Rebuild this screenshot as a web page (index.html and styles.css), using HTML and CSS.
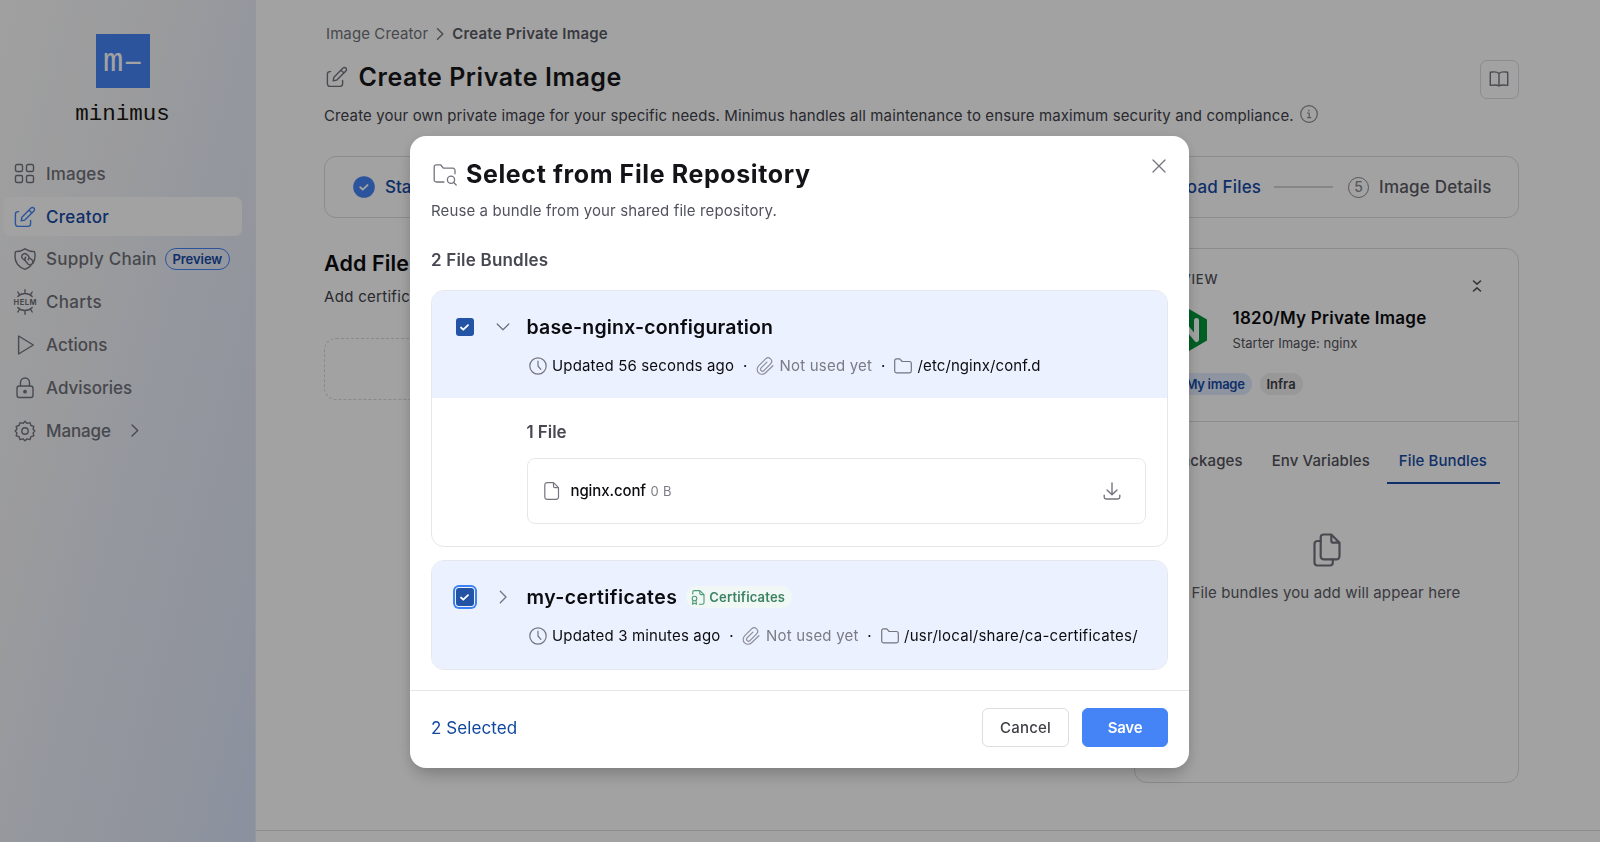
FILE: index.html
```html
<!DOCTYPE html>
<html lang="en">
<head>
<meta charset="utf-8">
<title>Create Private Image – minimus</title>
<link rel="stylesheet" href="styles.css">
</head>
<body>
<svg class="defs" width="0" height="0">
  <symbol id="edit" viewBox="0 0 22 22"><path d="M4.600 5.600H4a2.600 2.600 0 0 0-2.600 2.600v9.600A2.600 2.600 0 0 0 4 20.400h10a2.600 2.600 0 0 0 2.600-2.600v-3.400"/><path d="M7.200 14.800l.7-3.600L17 2.100a2 2 0 0 1 2.900 2.900l-9.100 9.100zM15 4.100l2.900 2.900"/></symbol>
  <symbol id="clock" viewBox="0 0 18 18"><circle cx="9" cy="9" r="8.200"/><path d="M9 4.200V9l2.800 3.300"/></symbol>
  <symbol id="clip" viewBox="0 0 18 18"><path d="M16.900 8.700l-7.300 7.100a4.900 4.900 0 0 1-7-6.900l7-7a3.500 3.500 0 0 1 5 4.900l-6.700 6.800a1.900 1.900 0 0 1-2.800-2.700l5.800-5.800"/></symbol>
  <symbol id="folder" viewBox="0 0 18 16"><path d="M.7 13V2.600A1.800 1.800 0 0 1 2.500.8h3.200l2.500 2.700h7.200a1.900 1.900 0 0 1 1.900 1.900V13a1.800 1.800 0 0 1-1.800 1.800h-13A1.800 1.800 0 0 1 .7 13z"/></symbol>
</svg>

<div class="app">
  <aside class="sidebar">
    <div class="brand">
      <div class="brand-mark">m–</div>
      <div class="brand-name">minimus</div>
    </div>
    <nav class="nav">
      <a class="nav-item"><svg class="icon" width="22" height="22" viewBox="0 0 22 22"><rect x="1.500" y="1.500" width="7" height="7" rx="1.500"/><rect x="12.500" y="1.500" width="7" height="7" rx="1.500"/><rect x="1.500" y="12.500" width="7" height="7" rx="1.500"/><rect x="12.500" y="12.500" width="7" height="7" rx="1.500"/></svg><span class="t-images">Images</span></a>
      <a class="nav-item active"><svg class="icon" width="22" height="22"><use href="#edit"/></svg><span class="t-creator">Creator</span></a>
      <a class="nav-item"><svg class="icon" width="22" height="22" viewBox="0 0 22 22"><path d="M11 .8C8 2.800 5 3.500 1.500 3.600C-.2 12 3 18.500 11 21.300c2.300-.9 4.300-2 5.800-3.500M11 .8c3 2 6 2.700 9.500 2.800 1 4 .6 8-1.300 11.300"/><path d="M11 12.300l-2-1.300a3 3 0 0 1-.5-4.200 3 3 0 0 1 4.200-.4l1.300 1.200a3 3 0 0 1 .2 4.100"/><path d="M11.700 9.300a3 3 0 0 0 .2 4.200l2.300 2.700a2.800 2.800 0 0 0 4-.4 2.900 2.900 0 0 0-.3-4l-2-1.600"/></svg><span class="t-supply">Supply Chain</span><span class="badge-preview">Preview</span></a>
      <a class="nav-item"><svg class="icon" width="22" height="26" viewBox="0 0 22 26"><path d="M3.800 7.600a10 10 0 0 1 14.400 0M3.800 18.400a10 10 0 0 0 14.400 0M11 4.200V.8M5.600 5.900L3.800 3M16.400 5.900L18.200 3M11 21.800v3.400M5.600 20.100L3.800 23M16.400 20.100l1.800 2.900"/><text class="helm" x="-.5" y="15.500" textLength="23">HELM</text></svg><span class="t-charts">Charts</span></a>
      <a class="nav-item"><svg class="icon" width="22" height="22" viewBox="0 0 22 22"><path d="M4.600 2v18L19.300 11z"/></svg><span class="t-actions">Actions</span></a>
      <a class="nav-item"><svg class="icon" width="22" height="22" viewBox="0 0 22 22"><rect x="3" y="9" width="16" height="11.500" rx="2.200"/><path d="M6.500 9V5.500a4.500 4.500 0 0 1 9 0V9"/><circle class="solid" cx="11" cy="14.700" r="1.200"/></svg><span>Advisories</span></a>
      <a class="nav-item"><svg class="icon" width="22" height="22" viewBox="0 0 22 22"><circle cx="11" cy="11" r="3.200"/><path d="M11 1.200l2.100 2.200 2.900-.8.900 2.900 2.900.9-.7 2.800 1.700 1.800-1.700 1.900.7 2.900-2.900.9-.9 2.900-2.900-.8L11 20.800l-2.100-2-2.900.8-.9-2.900-2.900-.9.700-2.900L1.200 11l1.700-1.800-.7-2.800 2.900-.9.900-2.900 2.900.8z"/></svg><span class="t-manage">Manage</span><svg class="icon more" width="8" height="13" viewBox="0 0 8 13"><path d="M1 1l5.700 5.500L1 12"/></svg></a>
    </nav>
  </aside>

  <main class="main">
    <div class="content">
      <header class="page-head">
        <div class="head-text">
          <div class="crumbs"><span>Image Creator</span><svg class="icon" width="8" height="12" viewBox="0 0 8 12"><path d="M1.500 .8L6.800 6 1.500 11.200"/></svg><b>Create Private Image</b></div>
          <h1 class="page-title"><svg class="icon" width="22" height="22"><use href="#edit"/></svg><span>Create Private Image</span></h1>
          <p class="page-desc"><span>Create your own private image for your specific needs. Minimus handles all maintenance to ensure maximum security and compliance.</span><svg class="icon" width="18" height="18" viewBox="0 0 18 18"><circle cx="9" cy="9" r="8.300"/><path d="M7.500 8h1.700v4.500M7.500 12.600h3.300M8.900 5v1"/></svg></p>
        </div>
        <button class="docs"><svg class="icon" width="20" height="16" viewBox="0 0 20 16"><path d="M10 2.500v12.300M10 2.500C8.500.8 5 .6 1.300 1.200v13.200c3.700-.7 7-.5 8.700.4 1.700-.9 5-1.100 8.700-.4V1.200C15 .6 11.500.8 10 2.500z"/></svg></button>
      </header>

      <section class="stepper">
        <div class="step done"><svg width="22" height="22" viewBox="0 0 22 22"><circle class="step-dot" cx="11" cy="11" r="10.800"/><path class="step-tick" d="M7.300 11.200l2.500 2.400 4.700-4.500"/></svg><span>Starter</span></div>
        <div class="steps-right">
          <div class="step done"><span class="upload">Upload Files</span></div>
          <i class="step-line"></i>
          <div class="step next"><em class="step-num">5</em><span>Image Details</span></div>
        </div>
      </section>

      <div class="columns">
        <section class="files">
          <h2 class="files-title">Add Files</h2>
          <p class="files-desc">Add certificates</p>
          <div class="dropzone"></div>
        </section>
        <section class="preview">
          <div class="preview-top">
            <div class="preview-bar"><span class="eyebrow">PREVIEW</span><svg class="icon" width="10" height="12" viewBox="0 0 10 12"><path d="M1.500 1L5 4.200 8.500 1M1.500 11L5 7.800 8.500 11"/></svg></div>
            <div class="image-row">
              <svg width="36" height="42" viewBox="0 0 36 42"><path class="nginx-hex" d="M18 0l18 10.500v21L18 42 0 31.500v-21z"/><path class="nginx-n" d="M10 30.500v-19l15.500 19v-19"/></svg>
              <div><div class="image-name">1820/My Private Image</div><div class="image-from">Starter Image: <span>nginx</span></div></div>
            </div>
            <div class="tags"><span class="tag blue">My image</span><span class="tag">Infra</span></div>
          </div>
          <div class="tabs"><span class="tab">Packages</span><span class="tab">Env Variables</span><span class="tab selected">File Bundles</span></div>
          <div class="empty">
            <svg class="icon" width="28" height="34" viewBox="0 0 28 34"><path d="M7.700 8H4.500A3 3 0 0 0 1.500 11v18.500a3 3 0 0 0 3 3h12.300a3 3 0 0 0 3-3v-3.200"/><path d="M10.700 1.500h7.600l8.200 8.200v13.600a3 3 0 0 1-3 3H10.700a3 3 0 0 1-3-3V4.500a3 3 0 0 1 3-3zM18.300 1.500v6.200a2 2 0 0 0 2 2h6.200"/></svg>
            <p>File bundles you add will appear here</p>
          </div>
        </section>
      </div>
    </div>
    <footer class="page-foot"></footer>
  </main>
</div>

<div class="overlay">
  <div class="modal">
    <div class="modal-body">
      <header class="modal-head">
        <h2 class="modal-title"><svg class="icon" width="24" height="22" viewBox="0 0 24 22"><path d="M11 18H3.200A2 2 0 0 1 1.200 16V2.800a2 2 0 0 1 2-2h4.300l3 3.400h9.300a2.200 2.200 0 0 1 2.200 2.200v3.400"/><circle cx="18" cy="15.800" r="3.600"/><path d="M20.700 18.500l2.500 2.500"/></svg><span>Select from File Repository</span></h2>
        <svg class="icon close" width="14" height="14" viewBox="0 0 14 14"><path d="M1 1l12 12M13 1L1 13"/></svg>
      </header>
      <p class="modal-sub">Reuse a bundle from your shared file repository.</p>
      <h3 class="count">2 File Bundles</h3>

      <article class="bundle open">
        <div class="bundle-head">
          <div class="bundle-line">
            <span class="check"><svg width="9" height="7" viewBox="0 0 9 7"><path d="M1 3.500l2.300 2.200L8 1.200"/></svg></span>
            <svg class="icon chevron" width="14" height="8" viewBox="0 0 14 8"><path d="M1.200 1L7 6.800 12.800 1"/></svg>
            <span class="bundle-name">base-nginx-configuration</span>
          </div>
          <div class="meta">
            <svg class="icon" width="18" height="18"><use href="#clock"/></svg><span class="m-updated">Updated 56 seconds ago</span><i>·</i>
            <svg class="icon dim" width="18" height="18"><use href="#clip"/></svg><span class="unused">Not used yet</span><i>·</i>
            <svg class="icon" width="18" height="16"><use href="#folder"/></svg><span class="m-path">/etc/nginx/conf.d</span>
          </div>
        </div>
        <div class="bundle-files">
          <h4 class="files-count">1 File</h4>
          <div class="file">
            <svg class="icon" width="16" height="18" viewBox="0 0 16 18"><path d="M3 .7h6.500l5 5V15a2.200 2.200 0 0 1-2.200 2.300H3A2.200 2.200 0 0 1 .8 15V3A2.200 2.200 0 0 1 3 .7zM9.500.7v3.500a1.500 1.500 0 0 0 1.500 1.500h3.500"/></svg>
            <span class="file-name">nginx.conf</span><span class="file-size">0 B</span>
            <svg class="icon download" width="18" height="18" viewBox="0 0 18 18"><path d="M9 1v11.500M4 8l5 4.700L14 8M1.200 13.300v1.900A1.900 1.900 0 0 0 3.100 17h11.800a1.900 1.900 0 0 0 1.900-1.800v-1.900"/></svg>
          </div>
        </div>
      </article>

      <article class="bundle">
        <div class="bundle-head">
          <div class="bundle-line">
            <span class="check focused"><svg width="9" height="7" viewBox="0 0 9 7"><path d="M1 3.500l2.300 2.200L8 1.200"/></svg></span>
            <svg class="icon chevron" width="14" height="14" viewBox="0 0 14 14"><path d="M4.300 1.200L10 7l-5.700 5.800"/></svg>
            <span class="bundle-name certs">my-certificates</span>
            <span class="cert-badge"><svg width="14" height="15" viewBox="0 0 14 15"><path d="M1.800 4.500V2A1.400 1.400 0 0 1 3.200.6h5.600l4.200 4v8.200a1.500 1.500 0 0 1-1.500 1.500H8M8.800.6V3.300a1.300 1.300 0 0 0 1.300 1.300H13"/><circle cx="3.500" cy="8.500" r="2.300"/><path d="M2 10.500L1.500 14.300l2-1.200 2 1.200L5 10.500"/></svg>Certificates</span>
          </div>
          <div class="meta">
            <svg class="icon" width="18" height="18"><use href="#clock"/></svg><span class="m-updated">Updated 3 minutes ago</span><i>·</i>
            <svg class="icon dim" width="18" height="18"><use href="#clip"/></svg><span class="unused">Not used yet</span><i>·</i>
            <svg class="icon" width="18" height="16"><use href="#folder"/></svg><span class="m-path long">/usr/local/share/ca-certificates/</span>
          </div>
        </div>
      </article>
    </div>
    <footer class="modal-foot">
      <span class="selected-count">2 Selected</span>
      <button class="btn cancel">Cancel</button>
      <button class="btn save">Save</button>
    </footer>
  </div>
</div>
</body>
</html>
```
FILE: styles.css
```css
* { box-sizing: border-box; }
body { margin: 0; font: 400 15px/20px Inter, "Liberation Sans", sans-serif; color: #0c0c10; background: #fff; }
h1, h2, h3, h4, p { margin: 0; font-weight: inherit; font-size: inherit; }
button { font: inherit; background: none; padding: 0; }
i, em { font-style: normal; }
span, h1, h2, h3, h4, p { white-space: nowrap; }
.defs { display: block; position: absolute; }
svg { flex: none; }
.icon { fill: none; stroke: #74747e; stroke-width: 1.4; stroke-linecap: round; stroke-linejoin: round; display: block; overflow: visible; }

.app { display: flex; width: 1600px; height: 842px; overflow: hidden; }

/* Sidebar */
.sidebar { width: 256px; flex: none; background: linear-gradient(105deg, #fcfcfc 0%, #f3f4f7 36%, #edf1f9 44%, #e7ecf8 65%, #e1e8f8 84%, #dbe4fb 100%); border-right: 1px solid #eeeef2; }
.brand { display: flex; flex-direction: column; align-items: center; padding: 34px 12px 0 0; width: 257px; }
.brand-mark { width: 54px; height: 54px; background: #4484f7; color: #fff; font: 34px/56px "Liberation Mono", monospace; text-align: center; text-indent: 1px; letter-spacing: -.5px; overflow: hidden; }
.brand-name { font: 22.500px/24px "Liberation Mono", monospace; margin-top: 14px; color: #1a1712; }
.nav { display: flex; flex-direction: column; gap: 3.800px; padding: 28.400px 13px 0 3px; }
.nav-item { display: flex; align-items: center; height: 39px; padding-left: 11px; border-radius: 7px; font-size: 17px; font-weight: 500; color: #71717a; }
.nav-item .icon { margin-right: 10px; }
.nav-item.active { background: #fff; color: #164aa6; }
.nav-item.active .icon { stroke: #4484f7; }
.nav-item .solid { fill: #71717a; }
.helm { font: 700 7.500px Inter, sans-serif; fill: #71717a; stroke: none; }
.t-images { letter-spacing: .1px; }
.t-actions { letter-spacing: 0; }
.t-creator { letter-spacing: .32px; }
.t-supply { letter-spacing: .25px; }
.t-charts { letter-spacing: .33px; }
.t-manage { letter-spacing: -.12px; }
.badge-preview { margin-left: 8px; height: 22px; width: 65px; border: 1px solid #4484f7; border-radius: 11px; font-size: 13px; line-height: 20px; font-weight: 600; letter-spacing: -.05px; color: #164aa6; text-align: center; }
.nav-item .more { margin: 0 0 0 20px; }

/* Page */
.main { flex: 1; display: flex; flex-direction: column; }
.content { flex: 1; padding: 24px 81.500px 0 68px; }
.page-head { display: flex; justify-content: space-between; height: 132px; }
.crumbs { display: flex; align-items: center; gap: 8px; padding-left: 2px; color: #71717a; letter-spacing: .1px; }
.crumbs b { font-weight: 600; letter-spacing: .22px; color: #5b5b65; }
.page-title { display: flex; align-items: center; gap: 10.500px; margin-top: 17px; padding-left: 2px; height: 32px; font-size: 25px; font-weight: 600; letter-spacing: .55px; color: #18181b; }
.page-desc { display: flex; align-items: center; gap: 6px; margin-top: 12.500px; letter-spacing: .12px; color: #3f3f4a; }
.page-desc .icon { stroke: #8a8a92; stroke-width: 1.200; margin-top: -4px; }
.docs { width: 39px; height: 39px; margin-top: 36px; border: 1px solid #dcdce0; border-radius: 7px; display: flex; align-items: center; justify-content: center; padding-bottom: 1px; }

.stepper { height: 62px; border: 1px solid #dcdce0; border-radius: 12px; display: flex; align-items: center; justify-content: space-between; padding: 0 26px 0 28px; font-size: 17px; font-weight: 500; }
.step { display: flex; align-items: center; gap: 10px; }
.step.done { color: #164aa6; }
.step.next { color: #5b5b65; letter-spacing: .19px; }
.step-dot { fill: #4484f7; }
.step-tick { fill: none; stroke: #fff; stroke-width: 2; stroke-linecap: round; stroke-linejoin: round; }
.steps-right { display: flex; align-items: center; }
.upload { letter-spacing: .15px; }
.step-line { width: 59px; height: 1.500px; background: #d4d4d8; margin: 0 15px 0 13px; }
.step-num { width: 21px; height: 21px; border: 1.500px solid #8a8a92; border-radius: 50%; font-size: 14px; line-height: 18px; text-align: center; color: #8a8a92; letter-spacing: 0; }

.columns { display: flex; justify-content: space-between; margin-top: 30px; }
.files { width: 786px; padding-top: 1px; }
.files-title { font-size: 21.500px; line-height: 28px; font-weight: 600; letter-spacing: .12px; }
.files-desc { margin-top: 10px; letter-spacing: .3px; color: #3f3f4a; }
.dropzone { margin-top: 31px; height: 62px; border: 1px dashed #d8d8dc; border-radius: 12px; }

.preview { width: 385px; height: 535px; border: 1px solid #dcdce0; border-radius: 13px; }
.preview-top { height: 172.500px; padding: 20px 36px 0 20px; border-bottom: 1.500px solid #dcdce0; }
.preview-bar { display: flex; justify-content: space-between; }
.preview-bar .icon { margin-top: 11px; stroke-width: 1.600; stroke: #52525b; }
.eyebrow { font-size: 13px; font-weight: 500; color: #52525b; letter-spacing: .8px; }
.image-row { display: flex; align-items: center; gap: 26px; margin: 15px 0 0 16px; height: 46px; }
.nginx-hex { fill: #009639; }
.nginx-n { fill: none; stroke: #fff; stroke-width: 5; stroke-linecap: round; stroke-linejoin: round; }
.image-name { font-size: 17px; line-height: 24px; font-weight: 600; letter-spacing: .24px; margin-top: 1px; }
.image-from { font-size: 13px; line-height: 26px; letter-spacing: .04px; color: #52525b; }
.tags { display: flex; gap: 8px; margin-top: 20px; padding-left: 24px; }
.tag { height: 22px; padding: 0 7px; border-radius: 11px; font-size: 13px; line-height: 22px; font-weight: 600; background: #efeff1; color: #3f3f46; }
.tag.blue { background: #e1eafd; color: #164aa6; letter-spacing: -.3px; }
.tabs { display: flex; justify-content: flex-end; padding-right: 18px; margin-top: 22px; gap: 5px; }
.tab { height: 40px; padding: 7px 12px 0; font-weight: 500; letter-spacing: .09px; color: #52525b; border-bottom: 2px solid transparent; }
.tab.selected { padding: 7px 12.500px 0 12px; color: #164aa6; border-color: #164aa6; }
.empty { display: flex; flex-direction: column; align-items: center; margin-top: 49.500px; color: #5b5b65; letter-spacing: .13px; }
.empty .icon { stroke-width: 2.200; margin-left: 1px; }
.empty p { margin-top: 16px; }
.page-foot { height: 12px; border-top: 1px solid #dcdce0; }

/* Dialog */
.overlay { position: fixed; inset: 0; background: rgba(0, 0, 0, .365); display: flex; align-items: flex-start; justify-content: center; padding: 136px 1px 0 0; }
.modal { width: 779px; height: 632px; background: #fff; border-radius: 16px; display: flex; flex-direction: column; box-shadow: 0 10px 18px -4px rgba(0, 0, 0, .22), 0 0 14px rgba(0, 0, 0, .08); }
.modal-body { flex: 1; padding: 21px 21px 0; }
.modal-head { display: flex; justify-content: space-between; align-items: flex-start; }
.modal-title { display: flex; align-items: center; gap: 9px; padding-left: 2px; height: 33px; font-size: 25px; font-weight: 700; letter-spacing: .61px; color: #131318; }
.modal-title .icon { stroke-width: 1.300; margin-top: 2px; }
.close { margin: 2px 2px 0 0; stroke-width: 1.300; }
.modal-sub { margin-top: 10.500px; letter-spacing: .11px; color: #52525e; }
.count { margin-top: 27.500px; font-size: 17px; line-height: 24px; font-weight: 600; letter-spacing: .2px; color: #484852; }
.bundle { border: 1px solid #e5e7eb; border-radius: 13px; overflow: hidden; margin-top: 13px; height: 110px; }
.bundle.open { margin-top: 18px; height: 257px; }
.bundle-head { background: #ebf1fe; height: 107px; padding: 21px 0 0 23.500px; }
.bundle:not(.open) .bundle-head { height: 108px; }
.bundle-line { display: flex; align-items: center; height: 30px; }
.check { width: 18px; height: 18px; border-radius: 3px; background: #2353a5; display: flex; align-items: center; justify-content: center; }
.check svg { fill: none; stroke: #fff; stroke-width: 1.800; stroke-linecap: round; stroke-linejoin: round; }
.check.focused { box-shadow: 0 0 0 1px #ebf1fe, 0 0 0 3px #3b82f6; }
.chevron { margin: 0 17px 0 22px; stroke-width: 1.300; }
.bundle-name { font-size: 19.500px; font-weight: 600; letter-spacing: .18px; }
.bundle-name.certs { letter-spacing: .42px; }
.cert-badge { display: flex; align-items: center; gap: 4px; margin-left: 9px; padding: 0 7px 0 5px; height: 22px; border-radius: 11px; background: #f0f7f5; color: #3a8262; font-size: 13px; font-weight: 600; letter-spacing: .18px; }
.cert-badge svg { fill: none; stroke: #4d9a78; stroke-width: 1.100; stroke-linejoin: round; }
.meta { display: flex; align-items: center; height: 20px; margin: 14px 0 0 73px; }
.meta .icon { margin-right: 5.500px; stroke-width: 1.200; }
.meta .dim { stroke: #8f8f99; }
.meta i { width: 22px; text-align: center; }
.m-updated { letter-spacing: .16px; }
.unused { color: #7b7b85; letter-spacing: .2px; }
.m-path { letter-spacing: .08px; }
.m-path.long { letter-spacing: .26px; }
.bundle-files { padding: 22px 21.500px 0 94.500px; }
.files-count { font-size: 17px; line-height: 24px; font-weight: 600; letter-spacing: -.05px; color: #484852; }
.file { display: flex; align-items: center; height: 66px; margin-top: 14px; padding: 0 23.500px 0 16px; border: 1px solid #e5e7eb; border-radius: 8px; }
.file .icon { stroke-width: 1.200; }
.file-name { margin-left: 11px; font-weight: 500; letter-spacing: -.1px; }
.file-size { margin-left: 4.500px; font-size: 13px; color: #7b7b85; letter-spacing: .32px; }
.file .download { margin-left: auto; stroke-width: 1.400; }
.modal-foot { height: 78px; border-top: 1px solid #e5e7eb; display: flex; align-items: flex-start; padding: 17px 21px 0; }
.selected-count { margin: 9.500px auto 0 0; font-size: 17px; color: #0f479f; letter-spacing: .08px; }
.btn { height: 39px; border-radius: 6px; border: 1px solid #dcdce1; }
.cancel { width: 87px; color: #3f3f46; font-weight: 500; letter-spacing: .2px; margin-right: 13px; }
.save { width: 86px; background: #4484f7; border-color: #4484f7; color: #fff; font-weight: 600; letter-spacing: -.2px; }
```
